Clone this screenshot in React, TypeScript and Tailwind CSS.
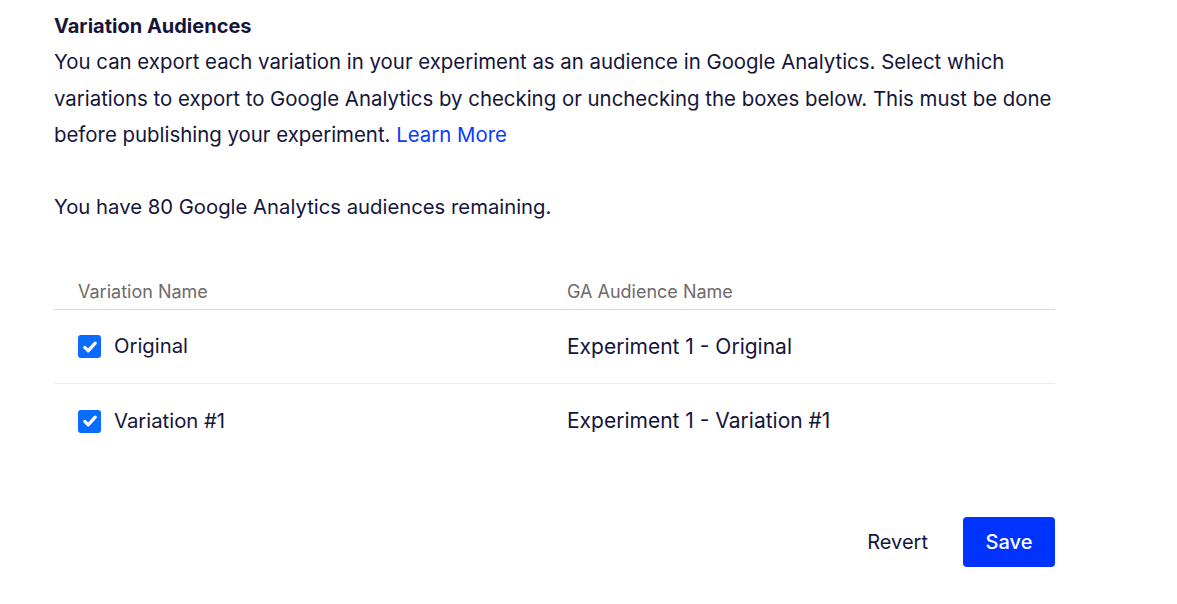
import React, { useState } from 'react';

const rows = [
  { name: 'Original', audience: 'Experiment 1 - Original' },
  { name: 'Variation #1', audience: 'Experiment 1 - Variation #1' },
];

function CheckBox({ checked, onChange }: { checked: boolean; onChange: () => void }) {
  return (
    <button
      type="button"
      onClick={onChange}
      className={`flex h-[23px] w-[23px] items-center justify-center rounded-[3px] ${
        checked ? 'bg-[#0a6cff]' : 'border-2 border-[#9a9aa8] bg-white'
      }`}
    >
      {checked && (
        <svg width="16" height="16" viewBox="0 0 16 16" fill="none">
          <path d="M2.8 8.4l3.4 3.4 7-7.6" stroke="white" strokeWidth="3.2" strokeLinecap="round" strokeLinejoin="round" />
        </svg>
      )}
    </button>
  );
}

export default function App() {
  const [checked, setChecked] = useState([true, true]);

  return (
    <div className="min-h-screen bg-white text-[#15153a]" style={{ fontFamily: 'Inter, "Noto Sans", sans-serif' }}>
      <div className="w-[1055px] pl-[54px] pt-[12px]">
        <h2 className="text-[20px] font-bold leading-[28px]">Variation Audiences</h2>
        <p className="mt-[4px] text-[20.4px] leading-[36.5px]">
          You can export each variation in your experiment as an audience in Google Analytics. Select which
          variations to export to Google Analytics by checking or unchecking the boxes below. This must be done
          before publishing your experiment.{' '}
          <a href="#" className="text-[#0c3bff]">
            Learn More
          </a>
        </p>
        <p className="mt-[35px] text-[20.3px] leading-[36.5px]">You have 80 Google Analytics audiences remaining.</p>

        <div className="mt-[55px]">
          <div className="grid grid-cols-[489px_1fr] border-b border-[#d6d6d6] pb-[5px] pl-[24px] text-[18px] leading-[24px] text-[#6f6a6a]">
            <div>Variation Name</div>
            <div>GA Audience Name</div>
          </div>
          {rows.map((row, i) => (
            <div
              key={row.name}
              className={`grid h-[74px] grid-cols-[489px_1fr] items-center pl-[24px] ${
                i < rows.length - 1 ? 'border-b border-[#ececec]' : ''
              }`}
            >
              <div className="flex items-center gap-[13px] text-[20.3px]">
                <CheckBox
                  checked={checked[i]}
                  onChange={() => setChecked(checked.map((c, j) => (j === i ? !c : c)))}
                />
                <span>{row.name}</span>
              </div>
              <div className="text-[21px]">{row.audience}</div>
            </div>
          ))}
        </div>

        <div className="mt-[59px] flex items-center justify-end gap-[35px]">
          <button type="button" className="text-[20px] text-[#15153a]">
            Revert
          </button>
          <button type="button" className="h-[50px] w-[92px] rounded-[4px] bg-[#0033ff] text-[20px] font-medium text-white">
            Save
          </button>
        </div>
      </div>
    </div>
  );
}
